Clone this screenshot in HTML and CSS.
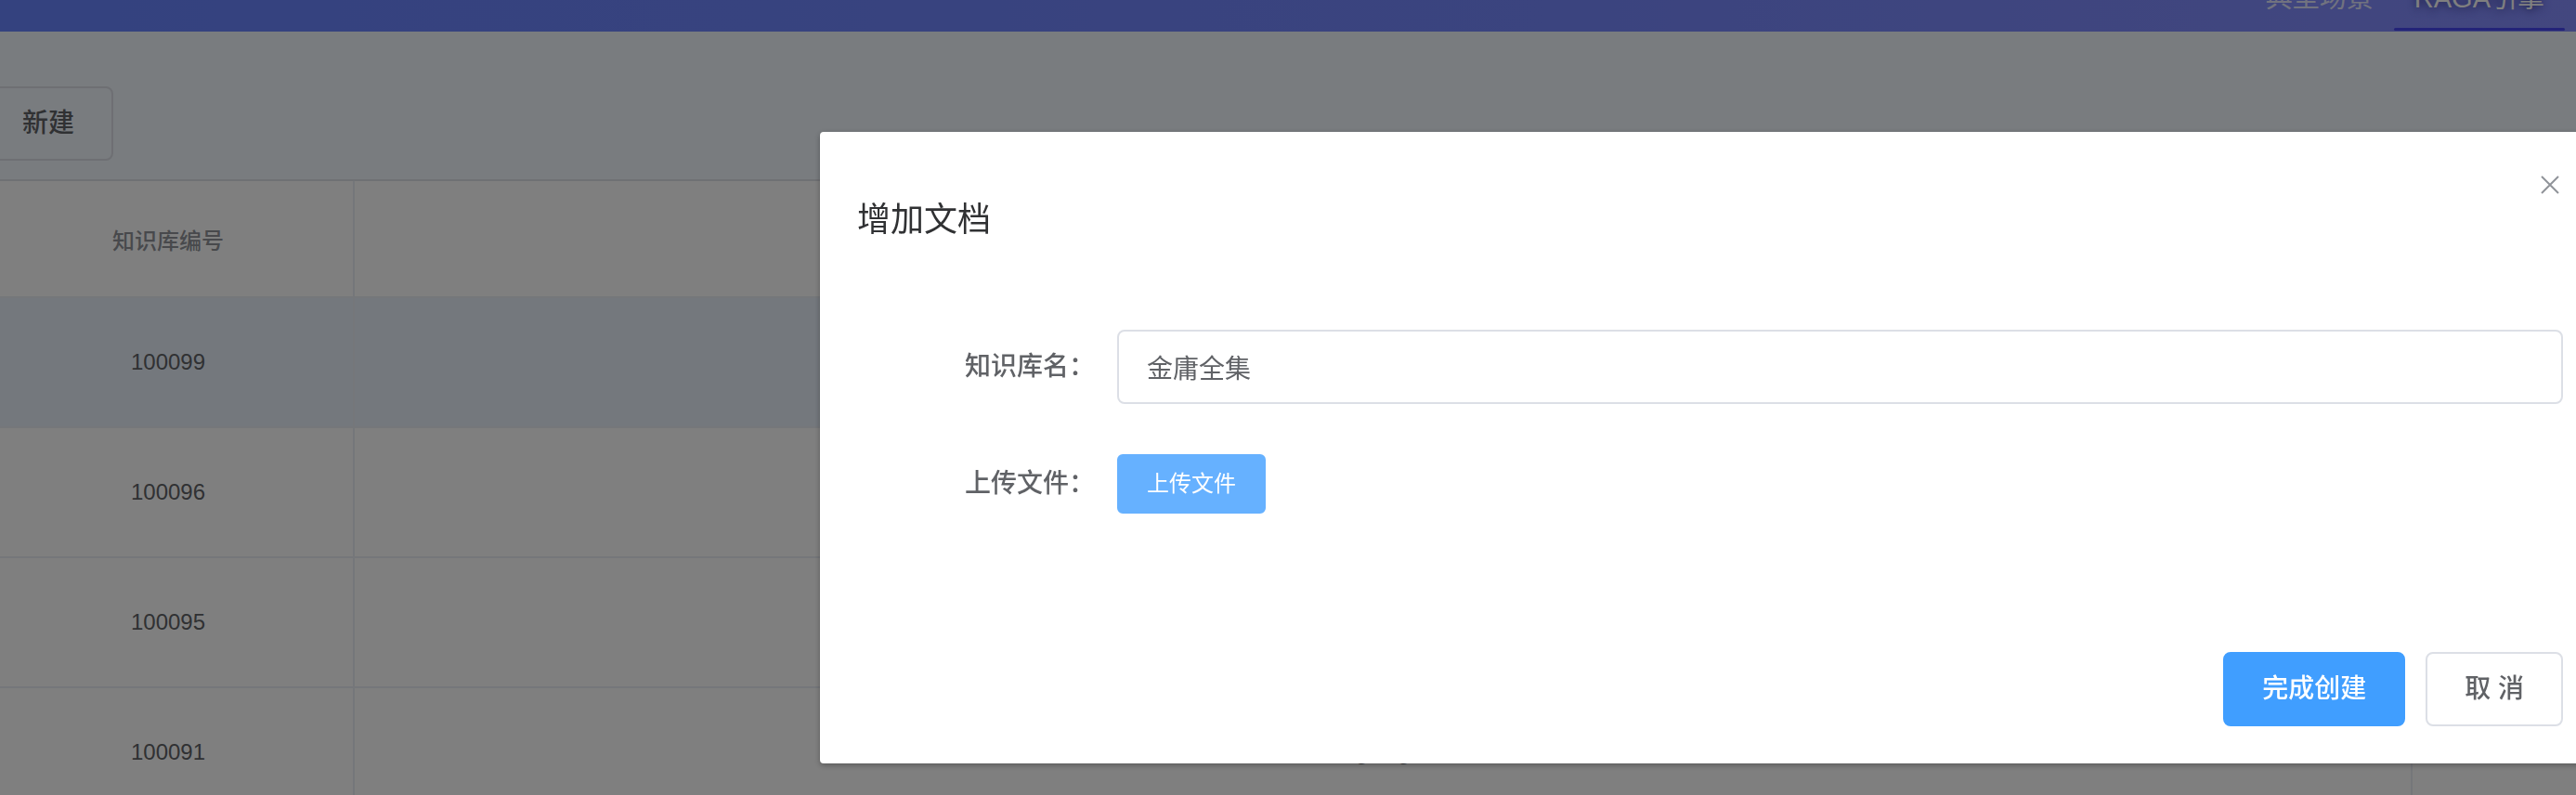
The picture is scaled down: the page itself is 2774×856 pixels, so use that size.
FILE: index.html
```html
<!DOCTYPE html>
<html lang="zh-CN">
<head>
<meta charset="utf-8">
<title>RAGA引擎 - 知识库</title>
<link rel="stylesheet" href="styles.css">
</head>
<body>
<div class="app">
  <header class="topbar">
    <nav class="tabs">
      <a class="tab"><span class="tab-text">典型场景</span></a>
      <a class="tab active"><span class="tab-text">RAGA引擎</span></a>
    </nav>
  </header>
  <main class="content">
    <div class="toolbar">
      <button class="btn">新建</button>
    </div>
    <div class="kb-table" role="table">
      <div class="row head" role="row">
        <div class="cell" role="columnheader">知识库编号</div>
        <div class="cell" role="columnheader"></div>
        <div class="cell" role="columnheader"></div>
      </div>
      <div class="row current" role="row">
        <div class="cell" role="cell">100099</div>
        <div class="cell" role="cell"></div>
        <div class="cell" role="cell"></div>
      </div>
      <div class="row" role="row">
        <div class="cell" role="cell">100096</div>
        <div class="cell" role="cell"></div>
        <div class="cell" role="cell"></div>
      </div>
      <div class="row" role="row">
        <div class="cell" role="cell">100095</div>
        <div class="cell" role="cell"></div>
        <div class="cell" role="cell"></div>
      </div>
      <div class="row" role="row">
        <div class="cell" role="cell">100091</div>
        <div class="cell" role="cell">going</div>
        <div class="cell" role="cell"></div>
      </div>
    </div>
  </main>
</div>

<div class="overlay"></div>

<div class="dialog" role="dialog">
  <div class="dialog-header">
    <span class="dialog-title">增加文档</span>
    <button class="dialog-close" aria-label="关闭">
      <svg width="20" height="20" viewBox="0 0 20 20"><path d="M1 1 L19 19 M19 1 L1 19" stroke="#909399" stroke-width="2" fill="none"/></svg>
    </button>
  </div>
  <div class="dialog-body">
    <form class="form">
      <div class="form-item">
        <label class="form-label">知识库名：</label>
        <div class="form-content">
          <input class="input" type="text" value="金庸全集">
        </div>
      </div>
      <div class="form-item">
        <label class="form-label">上传文件：</label>
        <div class="form-content">
          <button type="button" class="btn-upload">上传文件</button>
        </div>
      </div>
    </form>
  </div>
  <div class="dialog-footer">
    <button class="btn-lg primary">完成创建</button>
    <button class="btn-lg plain">取 消</button>
  </div>
</div>
</body>
</html>
```

FILE: styles.css
```css
* {
  box-sizing: border-box;
}

html, body {
  margin: 0;
  padding: 0;
  overflow: hidden;
  height: 100%;
}

body {
  font-family: "Liberation Sans", "Noto Sans CJK SC", sans-serif;
  background: #f2f8ff;
  color: #606266;
}

.app {
  width: 2774px;
  height: 856px;
  overflow: hidden;
}

/* top bar */
.topbar {
  height: 34px;
  overflow: hidden;
  display: flex;
  justify-content: flex-end;
  align-items: flex-end;
  padding-right: 12px;
  background: linear-gradient(90deg, #6884ff 0%, #7688ff 60%, #868eff 100%);
}

.tabs {
  display: flex;
  align-items: flex-end;
}

.tab {
  display: flex;
  flex-direction: column;
  color: rgba(255, 255, 255, 0.78);
  font-size: 29px;
}

.tab-text {
  display: block;
  line-height: 29px;
  padding: 0 22px;
  margin-bottom: 17px;
  white-space: nowrap;
}

.tab::after {
  content: "";
  display: block;
  height: 3px;
  margin-bottom: 1px;
  border-radius: 2px;
  background: transparent;
}

.tab.active {
  color: #fff;
}

.tab.active .tab-text {
  text-shadow: 0 2px 10px rgba(20, 20, 90, 0.7);
}

.tab.active::after {
  background: #4646f0;
}

/* content */
.content {
  margin-left: -18px;
}

.toolbar {
  padding-top: 59px;
  padding-bottom: 20px;
}

.btn {
  font-family: inherit;
  font-size: 28px;
  line-height: 28px;
  font-weight: 500;
  padding: 24px 40px;
  border: 2px solid #dcdfe6;
  border-radius: 8px;
  background: transparent;
  color: #606266;
}

.kb-table {
  width: 3020px;
  background: #fff;
  border-top: 2px solid #dfe2e9;
}

.row {
  display: grid;
  grid-template-columns: 400px 2216px 404px;
  height: 140px;
  border-bottom: 2px solid #ebeef5;
}

.row.head {
  height: 126px;
}

.row.current {
  background: #e9f1fb;
}

.cell {
  display: flex;
  align-items: center;
  justify-content: center;
  font-size: 24px;
  color: #606266;
  border-right: 2px solid #ebeef5;
}

.row.head .cell {
  color: #909399;
  font-weight: 500;
}

/* overlay + dialog */
.overlay {
  position: fixed;
  inset: 0;
  background: rgba(0, 0, 0, 0.5);
}

.dialog {
  position: fixed;
  left: 883px;
  top: 142px;
  width: 1917px;
  background: #fff;
  border-radius: 4px;
  box-shadow: 0 2px 6px rgba(0, 0, 0, 0.3);
}

.dialog-header {
  padding: 71px 40px 20px;
}

.dialog-title {
  font-size: 36px;
  line-height: 48px;
  color: #303133;
}

.dialog-close {
  position: absolute;
  top: 47px;
  right: 44px;
  width: 20px;
  height: 20px;
  padding: 0;
  border: 0;
  background: none;
  display: block;
}

.dialog-close svg {
  display: block;
}

.dialog-body {
  padding: 74px 40px 75px;
}

.form-item {
  display: flex;
  align-items: center;
  height: 80px;
  margin-bottom: 46px;
}

.form-label {
  width: 280px;
  flex: none;
  text-align: right;
  padding-right: 24px;
  font-size: 28px;
  line-height: 80px;
  color: #606266;
  font-weight: 500;
}

.form-content {
  flex: 1;
  display: flex;
  align-items: center;
}

.input {
  width: 100%;
  height: 80px;
  border: 2px solid #dcdfe6;
  border-radius: 8px;
  padding: 0 30px;
  font-family: inherit;
  font-size: 28px;
  color: #606266;
  outline: none;
}

.btn-upload {
  font-family: inherit;
  font-size: 24px;
  line-height: 24px;
  padding: 18px 30px;
  border: 2px solid #66b1ff;
  border-radius: 6px;
  background: #66b1ff;
  color: #fff;
}

.dialog-footer {
  padding: 0 40px 40px;
  margin-top: 20px;
  display: flex;
  justify-content: flex-end;
  gap: 22px;
}

.btn-lg {
  font-family: inherit;
  font-size: 28px;
  line-height: 28px;
  padding: 24px 40px;
  border: 2px solid #dcdfe6;
  border-radius: 8px;
  font-weight: 500;
}

.btn-lg.primary {
  background: #409eff;
  border-color: #409eff;
  color: #fff;
}

.btn-lg.plain {
  background: #fff;
  color: #606266;
}
```
